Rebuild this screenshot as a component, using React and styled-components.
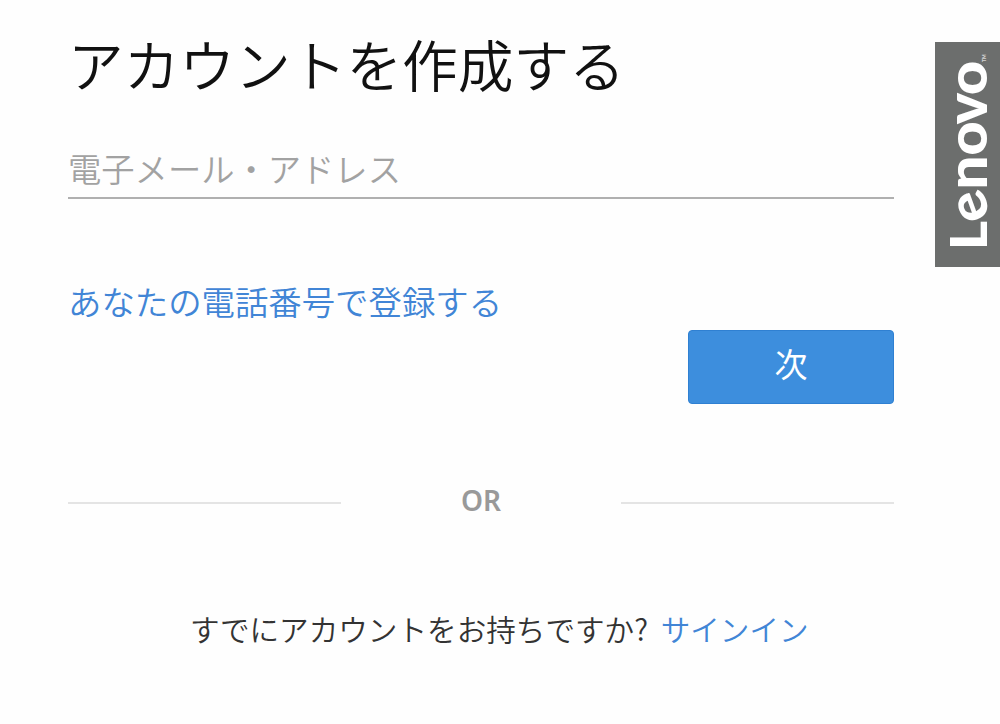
import React from "react"
import styled, { createGlobalStyle } from "styled-components"

const GlobalStyle = createGlobalStyle`
  * {
    box-sizing: border-box;
  }
  body {
    background-color: #fefefe;
    font-family: "Noto Sans CJK JP", "Noto Sans", sans-serif;
    margin: 0;
  }
`

const Page = styled.div`
  align-items: flex-start;
  display: flex;
  height: 724px;
  justify-content: space-between;
  overflow: hidden;
  padding-left: 68px;
`

const Form = styled.main`
  display: flex;
  flex-direction: column;
  width: 826px;
`

const Title = styled.h1`
  color: #111;
  font-size: 55.7px;
  font-weight: 350;
  line-height: 80px;
  margin: 23px 0 0;
  white-space: nowrap;
`

const EmailInput = styled.input`
  background: transparent;
  border: 0;
  border-bottom: 2px solid #b0b0b0;
  color: #333;
  font-family: inherit;
  font-size: 33.3px;
  font-weight: 350;
  height: 60px;
  margin-top: 36px;
  outline: 0;
  padding: 0 0 1px;
  width: 100%;

  &::placeholder {
    color: #a2a2a2;
    opacity: 1;
  }
`

const TextLink = styled.a`
  color: #4185d6;
  text-decoration: none;
`

const PhoneLink = styled(TextLink)`
  align-self: flex-start;
  font-size: 33.4px;
  font-weight: 350;
  line-height: 50px;
  margin-top: 77px;
`

const NextButton = styled.button`
  align-self: flex-end;
  background-color: #3d8edd;
  border: 1px solid #2f80d2;
  border-radius: 4px;
  color: #fff;
  font-family: inherit;
  font-size: 33px;
  font-weight: 400;
  height: 74px;
  line-height: 50px;
  margin-top: 4px;
  padding: 0 0 9px;
  width: 206px;
`

const Divider = styled.div`
  align-items: center;
  color: #999;
  display: flex;
  font-family: "Noto Sans", sans-serif;
  font-size: 28px;
  font-weight: 600;
  justify-content: space-between;
  line-height: 36px;
  margin-top: 78px;
  padding-bottom: 4px;
`

const Rule = styled.span`
  background-color: #e4e4e4;
  height: 2px;
  margin-top: 6px;
  width: 273px;
`

const SignIn = styled.p`
  color: #333;
  font-size: 29.6px;
  font-weight: 350;
  line-height: 44px;
  margin: 85px 0 0 122px;
  white-space: nowrap;

  a {
    margin-left: 6px;
  }
`

const Brand = styled.aside`
  background-color: #6c6e6d;
  height: 225px;
  margin-top: 42px;
  width: 65px;

  svg {
    display: block;
    overflow: visible;
  }
`

const LogoLetter = styled.text`
  fill: #fff;
  font-family: Lato, sans-serif;
  font-size: ${({ $size }) => $size}px;
  font-weight: 900;
`

// each letter is centred on x, then turned and stretched sideways
const letters = [
  { char: "L", x: 31.5, size: 51, turn: 0, stretch: 1.1 },
  { char: "e", x: 61, size: 54, turn: -20, stretch: 1.08 },
  { char: "n", x: 94.5, size: 56, turn: 0, stretch: 1.08 },
  { char: "o", x: 128.5, size: 56, turn: 0, stretch: 1.07 },
  { char: "v", x: 158.5, size: 57, turn: 0, stretch: 1.04 },
  { char: "o", x: 189, size: 56, turn: 0, stretch: 1.07 },
]

const Logo = () =>
<svg width="65" height="225" viewBox="0 0 65 225" aria-label="Lenovo">
  <g transform="translate(0 225) rotate(-90)">
    {letters.map(({ char, x, size, turn, stretch }) =>
      <LogoLetter
        key={x}
        $size={size}
        y="14"
        textAnchor="middle"
        transform={`translate(${x} 38) rotate(${turn}) scale(${stretch} 1)`}
      >
        {char}
      </LogoLetter>
    )}
    <LogoLetter $size={5} x="205" y="51" opacity="0.7">TM</LogoLetter>
  </g>
</svg>

export default () =>
<>
  <GlobalStyle />
  <Page>
    <Form>
      <Title>アカウントを作成する</Title>
      <EmailInput placeholder="電子メール・アドレス" />
      <PhoneLink href="#">あなたの電話番号で登録する</PhoneLink>
      <NextButton>次</NextButton>
      <Divider>
        <Rule />
        <span>OR</span>
        <Rule />
      </Divider>
      <SignIn>
        すでにアカウントをお持ちですか? <TextLink href="#">サインイン</TextLink>
      </SignIn>
    </Form>
    <Brand>
      <Logo />
    </Brand>
  </Page>
</>
